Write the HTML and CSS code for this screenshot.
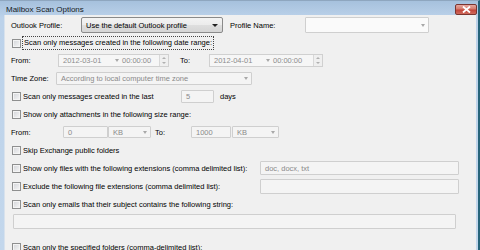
FILE: index.html
```html
<!DOCTYPE html>
<html>
<head>
<meta charset="utf-8">
<link rel="stylesheet" href="styles.css">
</head>
<body>
<div class="window">
  <div class="titlebar">
    <span class="title">Mailbox Scan Options</span>
    <span class="close"><svg width="9" height="7" viewBox="0 0 9 7"><path d="M1 0.5 L8 6.5 M8 0.5 L1 6.5" stroke="#fff" stroke-width="1.8"/></svg></span>
  </div>
  <div class="client">
    <div class="row r1">
      <span class="lbl w-profile">Outlook Profile:</span>
      <div class="ddl w142"><span class="txt">Use the default Outlook profile</span><span class="arrow dark"></span></div>
      <span class="lbl pname">Profile Name:</span>
      <div class="combo dis w124"><span class="txt"></span><span class="arrow"></span></div>
    </div>
    <div class="row r2">
      <span class="cb"></span>
      <span class="focus">Scan only messages created in the following date range:</span>
    </div>
    <div class="row r3">
      <span class="lbl w-from">From:</span>
      <div class="dtp w111"><span class="d">2012-03-01</span><span class="arrow sm"></span><span class="t">00:00:00</span><span class="spin"><i class="up"></i><i class="dn"></i></span></div>
      <span class="lbl to1">To:</span>
      <div class="dtp w114"><span class="d">2012-04-01</span><span class="arrow sm"></span><span class="t">00:00:00</span><span class="spin"><i class="up"></i><i class="dn"></i></span></div>
    </div>
    <div class="row r4">
      <span class="lbl w-tz">Time Zone:</span>
      <div class="combo dis w196"><span class="txt">According to local computer time zone</span><span class="arrow"></span></div>
    </div>
    <div class="row r5">
      <span class="cb"></span>
      <span class="lbl w-last">Scan only messages created in the last</span>
      <div class="tb dis w33"><span class="txt">5</span></div>
      <span class="lbl days">days</span>
    </div>
    <div class="row r6">
      <span class="cb"></span>
      <span class="lbl">Show only attachments in the following size range:</span>
    </div>
    <div class="row r7">
      <span class="lbl w-from2">From:</span>
      <div class="tb dis w45"><span class="txt">0</span></div>
      <div class="combo dis w43"><span class="txt">KB</span><span class="arrow"></span></div>
      <span class="lbl to2">To:</span>
      <div class="tb dis w40"><span class="txt">1000</span></div>
      <div class="combo dis w47 kb2"><span class="txt">KB</span><span class="arrow"></span></div>
    </div>
    <div class="row r8">
      <span class="cb"></span>
      <span class="lbl">Skip Exchange public folders</span>
    </div>
    <div class="row r9">
      <span class="cb"></span>
      <span class="lbl w-ext">Show only files with the following extensions (comma delimited list):</span>
      <div class="tb dis w199"><span class="txt">doc, docx, txt</span></div>
    </div>
    <div class="row r10">
      <span class="cb"></span>
      <span class="lbl w-ext">Exclude the following file extensions (comma delimited list):</span>
      <div class="tb dis w199"></div>
    </div>
    <div class="row r11">
      <span class="cb"></span>
      <span class="lbl">Scan only emails that their subject contains the following string:</span>
    </div>
    <div class="row r12">
      <div class="tb dis wfull"></div>
    </div>
    <div class="row r13">
      <span class="cb"></span>
      <span class="lbl">Scan only the specified folders (comma-delimited list):</span>
    </div>
  </div>
</div>
</body>
</html>
```

FILE: styles.css
```css
* { box-sizing: border-box; }
html, body { margin: 0; padding: 0; }
body {
  width: 480px;
  height: 250px;
  overflow: hidden;
  font-family: "Liberation Sans", Arial, sans-serif;
  font-size: 7.5px;
  color: #000;
  background: #fff;
}
.window {
  width: 480px;
  height: 250px;
  display: flex;
  flex-direction: column;
  background: linear-gradient(#a6c1dd, #bcd2ea 17px, #c3d7ec);
  border-right: 2px solid #27647a;
  border-top: 1px solid #8ea6bf;
}
.titlebar {
  height: 16px;
  display: flex;
  align-items: flex-start;
  padding-left: 6px;
}
.title {
  font-size: 8px;
  margin-top: 4px;
  color: #141a24;
}
.close {
  margin-left: auto;
  margin-right: 1px;
  margin-top: 3px;
  width: 22px;
  height: 11px;
  border: 1px solid #7a3530;
  border-radius: 2px;
  background: linear-gradient(#e6a8a0, #d57a6c 45%, #c2443a 55%, #cf6a5c);
  display: flex;
  align-items: center;
  justify-content: center;
}
.client {
  flex: 1;
  margin-left: 4px;
  margin-right: 2px;
  background: #f0f0f0;
  padding-left: 6px;
  border-left: 1px solid #d8e2ed;
}
.row {
  display: flex;
  align-items: center;
  white-space: nowrap;
}
.lbl { display: inline-block; }
.cb {
  width: 9px;
  height: 9px;
  margin-left: 1px;
  margin-right: 1px;
  border: 1px solid #8e8f8f;
  background: linear-gradient(135deg, #d2d4d8, #f7f7f7);
  box-shadow: inset 0 0 0 1px #f4f4f4;
  flex: none;
}
.focus {
  border: 1px dotted #444;
  padding: 1px 1px 2px 1px;
  line-height: 9px;
}
/* rows */
.r1 { height: 16px; margin-top: 2px; }
.r2 { height: 12px; margin-top: 4px; }
.r3 { height: 13px; margin-top: 5px; }
.r4 { height: 13px; margin-top: 5px; }
.r5 { height: 13px; margin-top: 5px; }
.r6 { height: 12px; margin-top: 5px; }
.r7 { height: 12px; margin-top: 6px; }
.r8 { height: 12px; margin-top: 6px; }
.r9 { height: 14px; margin-top: 5px; }
.r10 { height: 15px; margin-top: 4px; }
.r11 { height: 12px; margin-top: 4px; }
.r12 { height: 15px; margin-top: 4px; padding-left: 2px; }
.r13 { height: 12px; margin-top: 12px; }
.r6 .lbl, .r8 .lbl, .r11 .lbl, .r13 .lbl, .r5 .w-last, .r9 .w-ext, .r10 .w-ext { margin-left: 1px; }

.w-profile { width: 70px; }
.pname { width: 75px; margin-left: 7px; }
.w-from { width: 47px; }
.to1 { width: 29px; margin-left: 11px; }
.w-tz { width: 45px; }
.w-last { width: 158px; }
.days { margin-left: 6px; }
.w-from2 { width: 52px; }
.to2 { width: 36px; margin-left: 4px; }
.w-ext { width: 237px; }
.kb2 { margin-left: 1px; }

.w142 { width: 142px; }
.w124 { width: 124px; }
.w111 { width: 111px; }
.w114 { width: 114px; }
.w196 { width: 196px; }
.w33 { width: 33px; }
.w45 { width: 45px; }
.w43 { width: 43px; }
.w40 { width: 40px; }
.w47 { width: 47px; }
.w199 { width: 199px; }
.wfull { width: 443px; }

.ddl, .combo, .tb, .dtp {
  height: 100%;
  display: flex;
  align-items: center;
  flex: none;
}
.ddl {
  border: 1px solid #8a8a8a;
  border-radius: 2px;
  background: linear-gradient(#f3f3f3, #ececec 48%, #dedede 52%, #d5d5d5);
  padding-left: 4px;
  padding-right: 4px;
}
.ddl .txt { flex: 1; }
.combo, .tb {
  border: 1px solid #cfcfcf;
  border-radius: 1px;
  background: #f4f4f4;
  color: #8a8a8a;
  padding-left: 4px;
  padding-right: 3px;
}
.combo .txt, .tb .txt { flex: 1; }
.r1 .combo { background: #fafafa; }
.arrow {
  width: 0;
  height: 0;
  border-left: 2.5px solid transparent;
  border-right: 2.5px solid transparent;
  border-top: 3px solid #a8a8a8;
  flex: none;
}
.arrow.dark { border-top-color: #222; border-left-width: 3px; border-right-width: 3px; border-top-width: 3.5px; }
.dtp {
  border: 1px solid #d0d0d0;
  background: #f6f6f6;
  color: #8c8c8c;
  padding-left: 4px;
}
.dtp .d { width: 52px; }
.dtp .arrow.sm { margin-right: 3px; }
.dtp .t { flex: 1; }
.spin {
  width: 9px;
  height: 100%;
  display: flex;
  flex-direction: column;
  border-left: 1px solid #d8d8d8;
  background: #efefef;
}
.spin i {
  flex: 1;
  display: flex;
  align-items: center;
  justify-content: center;
}
.spin i::after {
  content: "";
  border-left: 2px solid transparent;
  border-right: 2px solid transparent;
}
.spin .up::after { border-bottom: 2px solid #b0b0b0; }
.spin .dn::after { border-top: 2px solid #b0b0b0; }
```
